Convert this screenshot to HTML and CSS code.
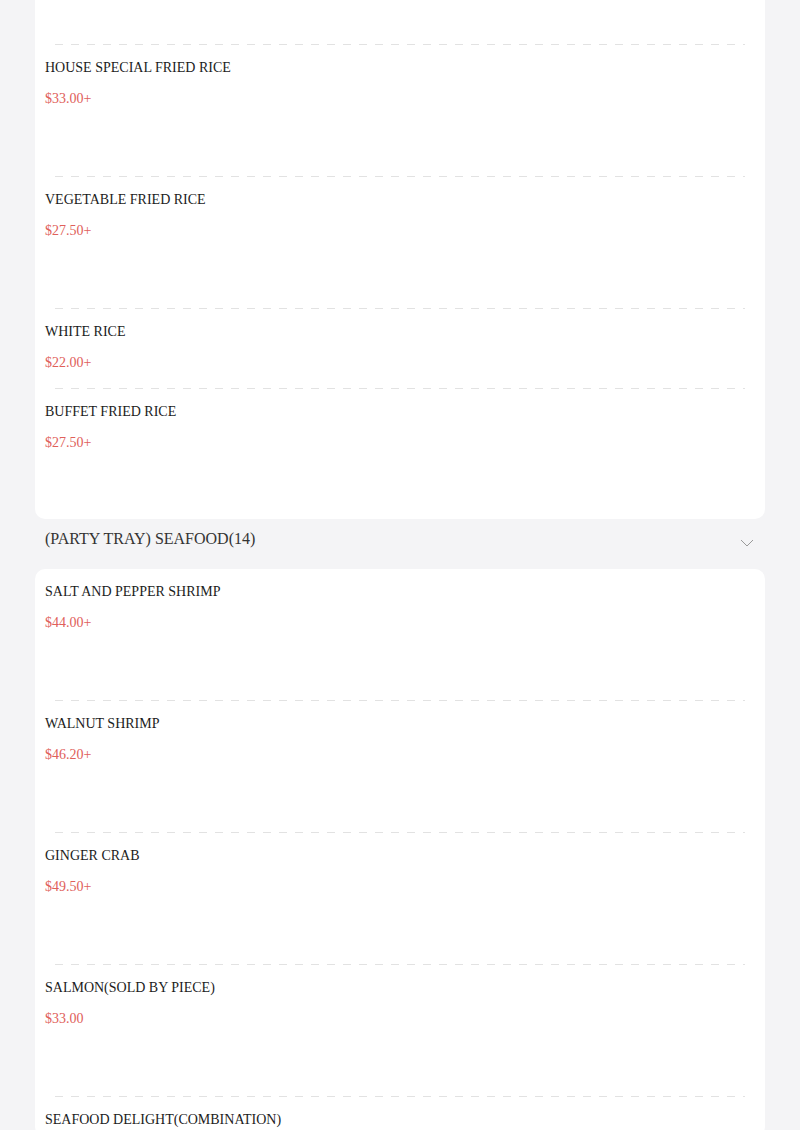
FILE: index.html
```html
<!DOCTYPE html>
<html>
<head>
<meta charset="utf-8">
<link rel="stylesheet" href="styles.css">
</head>
<body>
<div class="menu">
  <section class="card">
    <div class="item tall"></div>
    <div class="divider"></div>
    <div class="item tall">
      <div class="name">HOUSE SPECIAL FRIED RICE</div>
      <div class="price">$33.00+</div>
    </div>
    <div class="divider"></div>
    <div class="item tall">
      <div class="name">VEGETABLE FRIED RICE</div>
      <div class="price">$27.50+</div>
    </div>
    <div class="divider"></div>
    <div class="item">
      <div class="name">WHITE RICE</div>
      <div class="price">$22.00+</div>
    </div>
    <div class="divider"></div>
    <div class="item tall">
      <div class="name">BUFFET FRIED RICE</div>
      <div class="price">$27.50+</div>
    </div>
  </section>

  <div class="category">
    <span class="cat-title">(PARTY TRAY) SEAFOOD(14)</span>
    <svg class="chev" width="14" height="8" viewBox="0 0 14 8"><path d="M1 1 L7 7 L13 1" fill="none" stroke="#9a9a9a" stroke-width="1"/></svg>
  </div>

  <section class="card">
    <div class="item tall">
      <div class="name">SALT AND PEPPER SHRIMP</div>
      <div class="price">$44.00+</div>
    </div>
    <div class="divider"></div>
    <div class="item tall">
      <div class="name">WALNUT SHRIMP</div>
      <div class="price">$46.20+</div>
    </div>
    <div class="divider"></div>
    <div class="item tall">
      <div class="name">GINGER CRAB</div>
      <div class="price">$49.50+</div>
    </div>
    <div class="divider"></div>
    <div class="item tall">
      <div class="name">SALMON(SOLD BY PIECE)</div>
      <div class="price">$33.00</div>
    </div>
    <div class="divider"></div>
    <div class="item short-end">
      <div class="name">SEAFOOD DELIGHT(COMBINATION)</div>
    </div>
  </section>
</div>
</body>
</html>
```
FILE: styles.css
```css
html, body {
  margin: 0;
  padding: 0;
  background: #f4f4f6;
  font-family: "Liberation Serif", "Times New Roman", serif;
}
.menu {
  margin-top: -87px;
  padding: 0 35px;
}
.card {
  background: #ffffff;
  border-radius: 10px;
  padding: 0 10px;
}
.item {
  box-sizing: border-box;
  height: 79px;
  padding-top: 13px;
}
.item.tall {
  height: 131px;
}
.card .item.tall:last-child {
  height: 130px;
}
.item.short-end {
  height: 40px;
}
.name {
  font-size: 14px;
  line-height: 20px;
  color: #1c1c1c;
}
.price {
  margin-top: 11px;
  font-size: 14px;
  line-height: 20px;
  color: #e0605a;
}
.divider {
  height: 1px;
  margin: 0 10px;
  background: repeating-linear-gradient(to right, #e2e2e2 0 8px, transparent 8px 16px);
}
.category {
  height: 50px;
  box-sizing: border-box;
  padding: 9px 10px 0 10px;
  display: flex;
  justify-content: space-between;
  align-items: flex-start;
}
.cat-title {
  font-size: 16px;
  line-height: 22px;
  color: #333333;
}
.chev {
  margin-top: 11px;
  margin-right: 1px;
}
```
